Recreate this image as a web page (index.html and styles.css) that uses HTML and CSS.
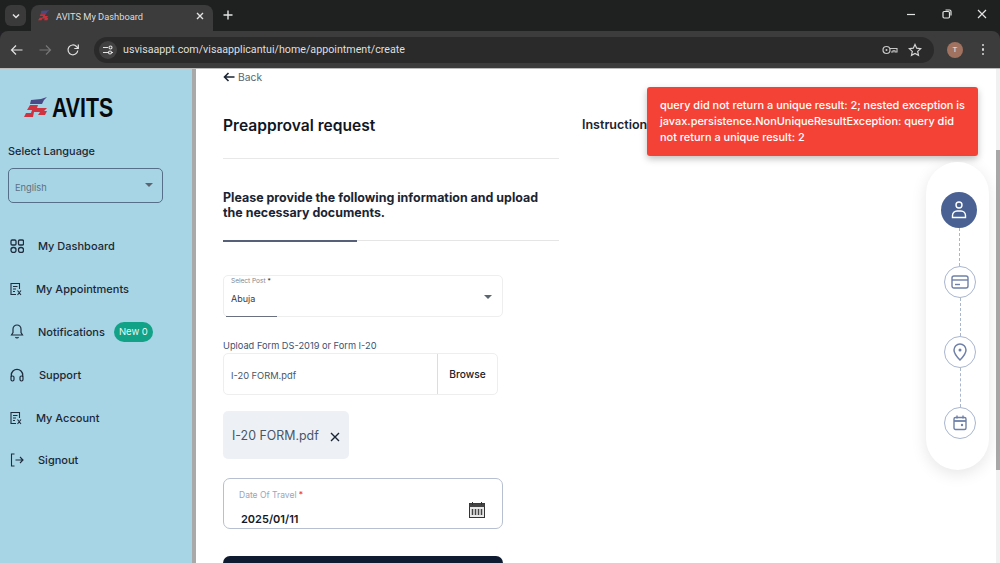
FILE: index.html
```html
<!DOCTYPE html>
<html lang="en">
<head>
<meta charset="utf-8">
<title>AVITS My Dashboard</title>
<link rel="stylesheet" href="styles.css">
</head>
<body>
<div class="browser">
  <div class="tabstrip">
    <div class="tabsearch"><svg width="10" height="10" viewBox="0 0 10 10"><path d="M2 3.5l3 3 3-3" fill="none" stroke="#e3e3e3" stroke-width="1.5"/></svg></div>
    <div class="tab">
      <svg class="favicon" width="12" height="12" viewBox="0 0 14 14"><path d="M4 1l6-.5 3-.5-2 2-2 3H3z" fill="#4b4a80"/><path d="M3 5h6l-1 2h4l-2 2h2l-1 3H7l1-2H5l-1 2H0l2-3h3l1-2H2z" fill="#c9303c"/></svg>
      <span class="tabtitle">AVITS My Dashboard</span>
      <svg class="tabclose" width="10" height="10" viewBox="0 0 10 10"><path d="M2 2l6 6M8 2l-6 6" stroke="#e3e3e3" stroke-width="1.4"/></svg>
    </div>
    <svg class="newtab" width="12" height="12" viewBox="0 0 12 12"><path d="M6 1.5v9M1.5 6h9" stroke="#e3e3e3" stroke-width="1.4"/></svg>
    <div class="winctrls">
      <svg width="12" height="12" viewBox="0 0 12 12"><path d="M2 6.5h8" stroke="#e3e3e3" stroke-width="1.2"/></svg>
      <svg width="12" height="12" viewBox="0 0 12 12"><rect x="2" y="3.5" width="6.5" height="6.5" rx="1.2" fill="none" stroke="#e3e3e3" stroke-width="1.2"/><path d="M4.5 2h4a1.5 1.5 0 0 1 1.5 1.5v4" fill="none" stroke="#e3e3e3" stroke-width="1.2"/></svg>
      <svg width="12" height="12" viewBox="0 0 12 12"><path d="M2 2l8 8M10 2l-8 8" stroke="#e3e3e3" stroke-width="1.2"/></svg>
    </div>
  </div>
  <div class="toolbar">
    <svg class="navicon" width="14" height="14" viewBox="0 0 14 14"><path d="M12.5 7h-11M6 2.5L1.500 7 6 11.500" fill="none" stroke="#e3e3e3" stroke-width="1.200"/></svg>
    <svg class="navicon" width="14" height="14" viewBox="0 0 14 14"><path d="M1.500 7h11M8 2.500L12.500 7 8 11.500" fill="none" stroke="#777" stroke-width="1.200"/></svg>
    <svg class="navicon" width="14" height="14" viewBox="0 0 14 14"><path d="M11.800 7.500A4.900 4.900 0 1 1 10.500 3.500L12 5" fill="none" stroke="#e3e3e3" stroke-width="1.200"/><path d="M12.300 1.500v4h-4" fill="none" stroke="#e3e3e3" stroke-width="1.200"/></svg>
    <div class="omnibox">
      <div class="siteinfo"><svg width="12" height="12" viewBox="0 0 12 12"><path d="M1 3.500h5M9.500 8.500h1.500M1 8.500h5" stroke="#e3e3e3" stroke-width="1.100"/><circle cx="8.500" cy="3.500" r="1.500" fill="none" stroke="#e3e3e3" stroke-width="1.100"/><circle cx="8" cy="8.500" r="1.500" fill="none" stroke="#e3e3e3" stroke-width="1.100"/></svg></div>
      <span class="url">usvisaappt.com/visaapplicantui/home/appointment/create</span>
      <svg class="omni-key" width="16" height="12" viewBox="0 0 16 12"><circle cx="4.500" cy="6" r="3.500" fill="none" stroke="#c7c7c7" stroke-width="1.200"/><circle cx="4.500" cy="6" r="1" fill="#c7c7c7"/><path d="M8 4.500h7v3.500h-2V6.800h-2V8H9" fill="none" stroke="#c7c7c7" stroke-width="1.100"/></svg>
      <svg class="omni-star" width="14" height="14" viewBox="0 0 14 14"><path d="M7 1.500l1.700 3.700 4 .5-3 2.700.8 4L7 10.500l-3.500 1.900.8-4-3-2.700 4-.5z" fill="none" stroke="#d5d5d5" stroke-width="1.200"/></svg>
    </div>
    <div class="avatar">T</div>
    <div class="kebab"><i></i><i></i><i></i></div>
  </div>
</div>
<div class="app">
  <aside class="sidebar">
    <div class="logo">
      <svg width="24" height="22" viewBox="0 0 24 22"><path d="M7 3l10-1 6-2-3 3-2 4H6z" fill="#4a4a86"/><path d="M6 8h8l-1 3h10l-3 3h3l-2 4h-7l2-3h-6l-1 5H0l2-4h5l1-3H3z" fill="#cf3340"/></svg>
      <span class="logotext">AVITS</span>
    </div>
    <div class="langlabel">Select Language</div>
    <div class="langselect"><span>English</span><i class="caret"></i></div>
    <nav class="menu">
      <a class="item"><svg class="micon" width="14" height="14" viewBox="0 0 14 14"><g fill="none" stroke="#1f2d3d" stroke-width="1.300"><rect x="1" y="1" width="5" height="5" rx="1.200"/><rect x="8.500" y="1" width="5" height="5" rx="1.200"/><rect x="1" y="8.500" width="5" height="5" rx="2.200"/><rect x="8.500" y="8.500" width="5" height="5" rx="2.200"/></g></svg><span class="mtext">My Dashboard</span></a>
      <a class="item tight"><svg class="micon" width="12" height="14" viewBox="0 0 12 14"><path d="M9.500 7V1.500H1v11h5M3 4.500h4.500M3 7h3M3 9.500h2M7.500 8.500l3.500 4.500M11 8.500l-3.500 4.500" fill="none" stroke="#1f2d3d" stroke-width="1.100"/></svg><span class="mtext">My Appointments</span></a>
      <a class="item"><svg class="micon" width="14" height="15" viewBox="0 0 14 15"><path d="M7 1a4 4 0 0 0-4 4v3.500L1.500 11h11L11 8.500V5a4 4 0 0 0-4-4zM5.500 13a1.700 1.700 0 0 0 3 0" fill="none" stroke="#1f2d3d" stroke-width="1.200"/></svg><span class="mtext">Notifications</span><span class="badge">New 0</span></a>
      <a class="item"><svg class="micon support" width="14" height="14" viewBox="0 0 14 14"><path d="M1.300 9V7a5.700 5.700 0 0 1 11.400 0v2" fill="none" stroke="#1f2d3d" stroke-width="1.300"/><rect x="1" y="8" width="3" height="5" rx="1.400" fill="none" stroke="#1f2d3d" stroke-width="1.200"/><rect x="10" y="8" width="3" height="5" rx="1.400" fill="none" stroke="#1f2d3d" stroke-width="1.200"/></svg><span class="mtext sup">Support</span></a>
      <a class="item tight"><svg class="micon" width="12" height="14" viewBox="0 0 12 14"><path d="M9.500 7V1.500H1v11h5M3 4.500h4.500M3 7h3M3 9.500h2M7.500 8.500l3.500 4.500M11 8.500l-3.500 4.500" fill="none" stroke="#1f2d3d" stroke-width="1.100"/></svg><span class="mtext">My Account</span></a>
      <a class="item"><svg class="micon" width="14" height="14" viewBox="0 0 14 14"><path d="M4.500 1H1.500v12h3M5.500 7h7.500M10 4l3 3-3 3" fill="none" stroke="#1f2d3d" stroke-width="1.100"/></svg><span class="mtext">Signout</span></a>
    </nav>
  </aside>
  <div class="sidescroll"></div>
  <main class="main">
    <div class="formcol">
      <div class="back"><svg width="12" height="10" viewBox="0 0 12 10"><path d="M11.500 5H1.500M5.500 1L1.500 5l4 4" fill="none" stroke="#1a2434" stroke-width="1.600"/></svg><span>Back</span></div>
      <h1 class="title">Preapproval request</h1>
      <hr class="rule">
      <h2 class="subtitle">Please provide the following information and upload the necessary documents.</h2>
      <div class="progress"><div class="progressfill"></div></div>
      <div class="postfield">
        <label class="postlabel">Select Post <b>*</b></label>
        <div class="postvalue">Abuja</div>
        <i class="caret postcaret"></i>
        <div class="postline"></div>
      </div>
      <div class="uploadlabel">Upload Form DS-2019 or Form I-20</div>
      <div class="upload">
        <div class="filename">I-20 FORM.pdf</div>
        <div class="browse">Browse</div>
      </div>
      <div class="chip">
        <span>I-20 FORM.pdf</span>
        <svg width="10" height="10" viewBox="0 0 10 10"><path d="M1 1l8 8M9 1l-8 8" stroke="#1a2434" stroke-width="1.400"/></svg>
      </div>
      <div class="datefield">
        <div class="datelabel">Date Of Travel <b>*</b></div>
        <div class="datevalue">2025/01/11</div>
        <svg class="calicon" width="16" height="16" viewBox="0 0 16 16"><rect x=".5" y="1.500" width="15" height="14" fill="#e8e8e8" stroke="#333"/><rect x=".5" y="1.500" width="15" height="3.500" fill="#444"/><path d="M3.500 0v3M12.500 0v3" stroke="#333"/><path d="M3.500 7v6M6.500 7v6M9.500 7v6M12.500 7v6" stroke="#444" stroke-width="1.500"/></svg>
      </div>
      <div class="submit"></div>
    </div>
    <div class="instr">Instructions</div>
  </main>
  <div class="pagescroll"><div class="thumb"></div></div>
  <div class="toast">query did not return a unique result: 2; nested exception is javax.persistence.NonUniqueResultException: query did not return a unique result: 2</div>
  <div class="stepper">
    <div class="step active"><svg width="18" height="20" viewBox="0 0 18 20"><circle cx="9" cy="5" r="3" fill="none" stroke="#fff" stroke-width="1.400"/><path d="M2.500 17.500v-2A4.500 4.500 0 0 1 7 11h4a4.500 4.500 0 0 1 4.500 4.500v2z" fill="none" stroke="#fff" stroke-width="1.400"/></svg></div>
    <div class="link first"></div>
    <div class="step"><svg width="18" height="16" viewBox="0 0 18 16"><rect x="1" y="2" width="16" height="12" rx="2" fill="none" stroke="#6f80a8" stroke-width="1.400"/><path d="M1 6h16" stroke="#6f80a8" stroke-width="1.400"/><path d="M4 10.500h5" stroke="#6f80a8" stroke-width="1.400"/></svg></div>
    <div class="link"></div>
    <div class="step"><svg width="14" height="18" viewBox="0 0 14 18"><path d="M7 17C3 13 1 10 1 7a6 6 0 0 1 12 0c0 3-2 6-6 10z" fill="none" stroke="#6f80a8" stroke-width="1.500"/><circle cx="7" cy="7" r="1.500" fill="#6f80a8"/></svg></div>
    <div class="link long"></div>
    <div class="step"><svg width="14" height="16" viewBox="0 0 14 16"><rect x="1" y="2.500" width="12" height="12" rx="1.500" fill="none" stroke="#6f80a8" stroke-width="1.400"/><path d="M1 6h12" stroke="#6f80a8" stroke-width="1.800"/><path d="M4 .5v3M10 .5v3" stroke="#6f80a8" stroke-width="1.400"/><circle cx="9" cy="10" r="1.200" fill="#6f80a8"/></svg></div>
  </div>
</div>
</body>
</html>
```

FILE: styles.css
```css
* { box-sizing: border-box; }
html, body { margin: 0; height: 100%; overflow: hidden; background: #fff; }
body { font-family: Inter, "Liberation Sans", sans-serif; width: 1000px; height: 563px; }

.browser { height: 68px; background: #202124; font-family: "Open Sans", "Liberation Sans", sans-serif; }
.tabstrip { height: 31px; display: flex; align-items: flex-start; padding: 5px 0 0 5px; position: relative; background: #1f2120; }
.tabsearch { width: 21px; height: 21px; border-radius: 6px; background: #3a3a3a; display: flex; align-items: center; justify-content: center; }
.tab { width: 182px; height: 26px; margin-left: 5px; background: #3c3c3c; border-radius: 8px 8px 0 0; display: flex; align-items: center; padding: 0 0 4px 7px; }
.favicon { margin-right: 6px; flex: none; }
.tabtitle { font-size: 9.300px; color: #dcdcdc; font-family: Roboto, "Liberation Sans", sans-serif; flex: 1; }
.tabclose { margin-right: 8px; }
.newtab { margin: 4px 0 0 9px; }
.winctrls { margin-left: auto; display: flex; gap: 23.500px; padding: 3px 12px 0 0; }
.toolbar { height: 37px; background: #3c3c3c; border-radius: 8px 8px 0 0; display: flex; align-items: center; padding: 0 0 0 10px; }
.navicon { margin-right: 14px; flex: none; }
.omnibox { width: 840px; height: 26px; background: #2a2a2a; border-radius: 13px; display: flex; align-items: center; padding: 0 12px 0 5px; }
.siteinfo { width: 18px; height: 18px; border-radius: 50%; background: #414141; display: flex; align-items: center; justify-content: center; margin-right: 6px; }
.url { font-size: 10.700px; color: #dfdfdf; font-family: Roboto, "Liberation Sans", sans-serif; flex: 1; }
.omni-key { margin-right: 10px; }
.avatar { width: 16px; height: 16px; margin-left: 13px; border-radius: 50%; background: #a1725f; color: #f4e9e4; font-size: 8px; display: flex; align-items: center; justify-content: center; font-family: Roboto, sans-serif; }
.kebab { margin-left: 18.500px; display: flex; flex-direction: column; gap: 2px; }
.kebab i { display: block; width: 2.500px; height: 2.500px; border-radius: 50%; background: #d8d8d8; }

.app { height: 495px; display: flex; position: relative; overflow: hidden; border-top: 1px solid #bbb; }
.sidebar { width: 192px; flex: none; background: #a8d5e5; color: #1a2434; }
.sidescroll { width: 4px; flex: none; background: #a9a9a9; }
.logo { display: flex; align-items: center; margin: 26px 0 0 24px; height: 26px; }
.logotext { font-family: "Liberation Sans", sans-serif; font-weight: 700; font-size: 28px; color: #07090c; transform: scaleX(.76); transform-origin: left center; margin-left: 4px; line-height: 26px; }
.langlabel { margin: 23px 0 0 8px; font-size: 10.900px; font-weight: 500; line-height: 15px; color: #1c2836; }
.langselect { margin: 9px 0 0 8px; width: 155px; height: 35px; border: 1px solid #56708a; border-radius: 5px; display: flex; align-items: center; justify-content: space-between; padding: 4px 9px 0 6px; font-size: 9.300px; color: #5d7181; }
.caret { display: block; width: 0; height: 0; border: 4px solid transparent; border-top: 4px solid #5b6570; border-bottom: 0; margin-top: -6px; }
.menu { margin-top: 22px; display: flex; flex-direction: column; }
.item { height: 42.800px; display: flex; align-items: center; padding-left: 10px; font-size: 11px; font-weight: 500; color: #1c2836; }
.micon { flex: none; width: 14px; margin-right: 14px; }
.item.tight .micon { width: 12px; margin-right: 14px; }
.sup { margin-left: 1px; }
.badge { margin-left: 9px; width: 39px; height: 20px; border-radius: 10px; background: #12a287; color: #e9f7f3; font-size: 9.500px; font-weight: 400; display: flex; align-items: center; justify-content: center; }

.main { flex: 1; display: flex; background: #fff; min-width: 0; }
.formcol { width: 336px; margin-left: 27px; flex: none; }
.back { display: flex; align-items: center; gap: 3px; height: 15px; font-size: 10.300px; color: #5a6472; }
.title { margin: 31px 0 0; font-size: 15.600px; font-weight: 600; line-height: 22px; color: #11161f; }
.rule { margin: 21px 0 0; border: 0; height: 1px; background: #e8e8e8; }
.subtitle { margin: 31px 0 0; font-size: 12.450px; font-weight: 700; line-height: 15px; color: #1a2434; }
.progress { margin-top: 20px; height: 1px; background: #e5e5e5; position: relative; }
.progressfill { position: absolute; left: 0; top: -.5px; width: 134px; height: 2px; background: #566078; }
.postfield { position: relative; margin-top: 34px; width: 280px; height: 42px; border: 1px solid #eee; border-radius: 5px; padding: 1px 7px; }
.postlabel { display: block; font-size: 6.500px; line-height: 9px; color: #7c8794; }
.postlabel b { font-weight: 400; color: #333; }
.postvalue { font-size: 9px; color: #333c48; margin-top: 7px; line-height: 12px; }
.postcaret { position: absolute; right: 10px; top: 19px; margin: 0; }
.postline { position: absolute; left: 2px; bottom: -1px; width: 51px; height: 1px; background: #6a7080; }
.uploadlabel { margin-top: 23px; font-size: 9.250px; line-height: 12px; color: #3a5272; }
.upload { margin-top: 1px; width: 275px; height: 42px; border: 1px solid #eee; border-radius: 5px; display: flex; }
.filename { flex: 1; font-size: 9.300px; color: #4b5563; display: flex; align-items: center; padding: 2px 0 0 7px; }
.browse { width: 60px; border-left: 1px solid #ddd; display: flex; align-items: center; justify-content: center; font-size: 10.200px; font-weight: 500; color: #1a2027; }
.chip { margin-top: 16px; width: 126px; height: 48px; background: #edf1f5; border-radius: 5px; display: flex; align-items: center; justify-content: space-between; padding: 0 9px 0 9px; font-size: 12.400px; color: #4a5568; }
.chip svg { margin-top: 3px; }
.datefield { position: relative; margin-top: 19px; width: 280px; height: 51px; border: 1px solid #b7bfd0; border-radius: 7px; padding: 11px 15px; }
.datelabel { font-size: 8.500px; line-height: 11px; color: #9aa5bb; }
.datelabel b { font-weight: 400; color: #e53e3e; }
.datevalue { margin-top: 11px; padding-left: 2px; font-size: 11px; font-weight: 600; line-height: 14px; color: #14181f; }
.calicon { position: absolute; right: 17px; top: 23px; }
.submit { margin-top: 27px; width: 280px; height: 30px; background: #0f1b30; border-radius: 7px 7px 0 0; }
.instr { margin: 48px 0 0 23px; font-size: 12.500px; font-weight: 600; color: #1a2434; line-height: 16px; white-space: nowrap; }

.pagescroll { width: 4px; flex: none; background: #f1f1f1; position: relative; }
.thumb { position: absolute; top: 81px; left: 0; width: 4px; height: 320px; background: #a8a8a8; }

.toast { position: absolute; left: 647px; top: 18px; width: 331px; height: 69px; background: #f44336; border-radius: 3px; padding: 10px 8px 10px 13px; color: #fff; font-size: 10.950px; font-weight: 500; line-height: 16px; box-shadow: 0 3px 7px rgba(0,0,0,.25); }
.stepper { position: absolute; left: 926px; top: 93px; width: 63px; height: 308px; background: #fff; border-radius: 32px; box-shadow: 0 4px 16px rgba(0,0,0,.1); display: flex; flex-direction: column; align-items: center; padding: 30px 0 0 5px; }
.step { width: 32px; height: 32px; border: 1px solid #a9b6d0; border-radius: 50%; display: flex; align-items: center; justify-content: center; flex: none; background: #fff; }
.step.active { width: 36px; height: 36px; background: #4a6293; border: 0; margin-left: -2px; }
.link { width: 0; height: 38px; border-left: 1px dashed #a9b6d0; flex: none; }
.link.first { margin-left: -2px; }
.link.long { height: 39px; }
```
